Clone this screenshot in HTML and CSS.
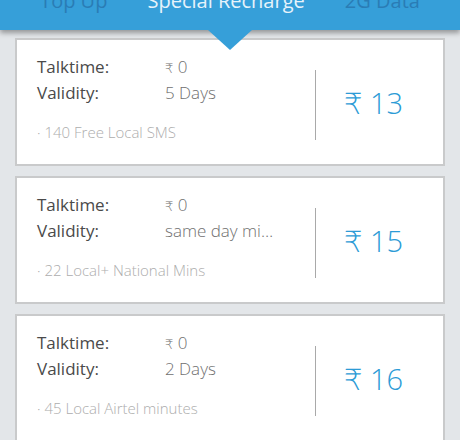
FILE: index.html
```html
<!DOCTYPE html>
<html lang="en">
<head>
  <meta charset="UTF-8" />
  <meta name="viewport" content="width=device-width, initial-scale=1.0" />
  <title>Special Recharge</title>
  <link rel="stylesheet" href="styles.css">
</head>
<body>
  <div class="header">
    <div class="tabs">
      <span class="tab">Top Up</span>
      <span class="tab active">Special Recharge</span>
      <span class="tab">2G Data</span>
    </div>
  </div>

  <div class="plans">
    <div class="card">
      <div class="info">
        <div class="row"><span class="label">Talktime:</span><span class="value"><span class="rs">₹</span> 0</span></div>
        <div class="row"><span class="label">Validity:</span><span class="value">5 Days</span></div>
        <div class="note">· 140 Free Local SMS</div>
      </div>
      <div class="divider"></div>
      <div class="price">₹ 13</div>
    </div>

    <div class="card">
      <div class="info">
        <div class="row"><span class="label">Talktime:</span><span class="value"><span class="rs">₹</span> 0</span></div>
        <div class="row"><span class="label">Validity:</span><span class="value">same day minutes</span></div>
        <div class="note">· 22 Local+ National Mins</div>
      </div>
      <div class="divider"></div>
      <div class="price">₹ 15</div>
    </div>

    <div class="card">
      <div class="info">
        <div class="row"><span class="label">Talktime:</span><span class="value"><span class="rs">₹</span> 0</span></div>
        <div class="row"><span class="label">Validity:</span><span class="value">2 Days</span></div>
        <div class="note">· 45 Local Airtel minutes</div>
      </div>
      <div class="divider"></div>
      <div class="price">₹ 16</div>
    </div>
  </div>
</body>
</html>
```

FILE: styles.css
```css
* {
  margin: 0;
  padding: 0;
  box-sizing: border-box;
}
body {
  font-family: "Open Sans", "DejaVu Sans", sans-serif;
  background-color: #e3e6e9;
  color: #4a4a4a;
  overflow: hidden;
}
.header {
  position: relative;
  height: 30px;
  background: #369fd9;
  box-shadow: 0 3px 5px rgba(0, 0, 0, 0.35);
  z-index: 2;
}
.header::after {
  content: "";
  position: absolute;
  left: 208px;
  top: 30px;
  border-left: 22px solid transparent;
  border-right: 22px solid transparent;
  border-top: 20px solid #369fd9;
}
.tabs {
  display: flex;
  justify-content: space-evenly;
  height: 30px;
  overflow: hidden;
}
.tab {
  font-size: 20px;
  line-height: 20px;
  margin-top: -9px;
  color: #2a7cb5;
}
.tab.active {
  color: #e6f3fb;
}
.plans {
  display: flex;
  flex-direction: column;
  gap: 10px;
  padding: 8px 15px 0;
}
.card {
  display: flex;
  height: 128px;
  flex-shrink: 0;
  background: #fff;
  border: 2px solid #c9cacb;
}
.info {
  width: 298px;
  padding: 14px 0 0 20px;
}
.row {
  display: flex;
  height: 26px;
  font-size: 17px;
  line-height: 26px;
}
.label {
  width: 128px;
  flex-shrink: 0;
}
.value {
  color: #707070;
  font-weight: 300;
  white-space: nowrap;
  overflow: hidden;
  text-overflow: ellipsis;
  max-width: 114px;
}
.rs {
  font-size: 13px;
}
.note {
  margin-top: 16px;
  font-size: 15px;
  line-height: 20px;
  font-weight: 300;
  color: #adadad;
}
.divider {
  width: 1px;
  margin: 30px 0 24px;
  background: #a9a9a9;
}
.price {
  align-self: center;
  padding-left: 28px;
  font-size: 29px;
  font-weight: 300;
  color: #2c9bd6;
}
```
